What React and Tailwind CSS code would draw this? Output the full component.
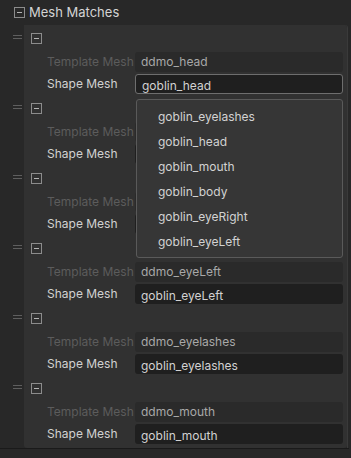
import React from 'react';

const items = [
  { template: 'ddmo_head', shape: 'goblin_head', focused: true },
  { template: 'ddmo_body', shape: 'goblin_body' },
  { template: 'ddmo_eyeRight', shape: 'goblin_eyeRight' },
  { template: 'ddmo_eyeLeft', shape: 'goblin_eyeLeft' },
  { template: 'ddmo_eyelashes', shape: 'goblin_eyelashes' },
  { template: 'ddmo_mouth', shape: 'goblin_mouth' },
];

const options = [
  'goblin_eyelashes',
  'goblin_head',
  'goblin_mouth',
  'goblin_body',
  'goblin_eyeRight',
  'goblin_eyeLeft',
];

const Foldout = () => (
  <div className="w-[11px] h-[11px] border border-[#8c8c8c] flex items-center justify-center shrink-0">
    <div className="w-[5px] h-px bg-[#b4b4b4]" />
  </div>
);

const Item = ({ item }) => (
  <div className="flex h-[70px]">
    <div className="w-[24px] shrink-0 bg-[#282828] pt-[10px] pl-[13px]">
      <div className="w-[9px] h-px bg-[#5e5e5e]" />
      <div className="w-[9px] h-px bg-[#5e5e5e] mt-[2px]" />
    </div>
    <div className="flex-1 bg-[#313131] pt-[8px]">
      <div className="pl-[7px]">
        <Foldout />
      </div>
      <div className="flex items-center h-[20px] mt-[8px]">
        <div className="w-[111px] pl-[23px] text-[#5c5c5c]">Template Mesh</div>
        <div className="w-[208px] h-[20px] rounded-[3px] bg-[#2a2a2a] pl-[6px] flex items-center text-[#a8a8a8]">
          {item.template}
        </div>
      </div>
      <div className="flex items-center h-[20px] mt-[2px]">
        <div className="w-[111px] pl-[23px] text-[#d2d2d2]">Shape Mesh</div>
        <div
          className={`w-[208px] h-[20px] rounded-[3px] bg-[#1f1f1f] pl-[6px] pt-[3px] flex items-center overflow-hidden text-[#d2d2d2] ${
            item.focused ? 'border border-[#6e6e6e] pl-[5px]' : ''
          }`}
        >
          {item.shape}
        </div>
      </div>
    </div>
  </div>
);

const App = () => {
  return (
    <div className="w-[351px] h-[458px] bg-[#282828] relative overflow-hidden text-[12px] font-['Inter',sans-serif] leading-none">
      {/* Header */}
      <div className="h-[25px] flex items-center pl-[14px] pb-[1px]">
        <Foldout />
        <span className="ml-[4px] text-[13px] text-[#d4d4d4]">Mesh Matches</span>
      </div>

      {/* List */}
      <div className="w-[349px] border-b border-[#1a1a1a]">
        <div className="w-[348px] border-r border-[#3a3a3a] rounded-tr-[3px] overflow-hidden">
          {items.map((item, i) => (
            <Item key={i} item={item} />
          ))}
          <div className="flex h-[3px]">
            <div className="w-[24px] bg-[#282828]" />
            <div className="flex-1 bg-[#313131] rounded-b-[3px]" />
          </div>
        </div>
      </div>

      {/* Dropdown */}
      <div className="absolute left-[136px] top-[99px] w-[207px] h-[159px] bg-[#363636] border border-[#5a5a5a] rounded-[3px] pt-[4px]">
        {options.map((opt) => (
          <div key={opt} className="h-[25px] flex items-center pl-[21px] text-[#d2d2d2]">
            {opt}
          </div>
        ))}
      </div>
    </div>
  );
};

export default App;
